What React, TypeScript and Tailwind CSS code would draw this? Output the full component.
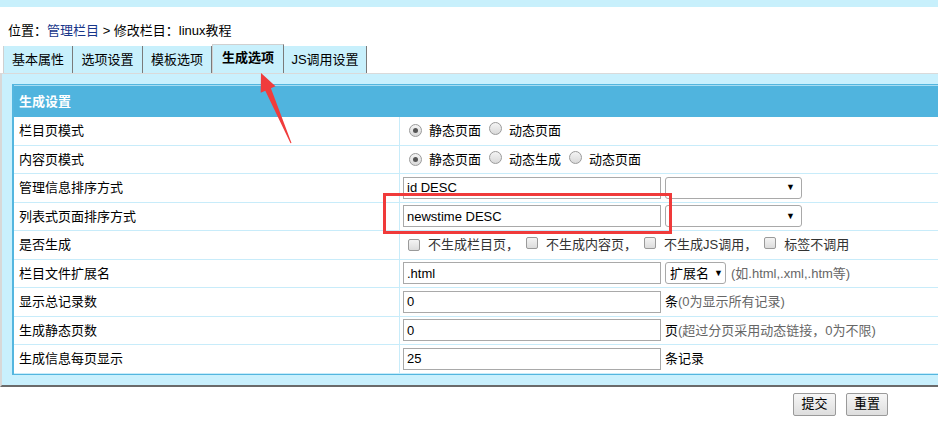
import React from 'react';

const Radio = ({ checked }: { checked?: boolean }) => (
  <span className="inline-flex h-[13px] w-[13px] shrink-0 items-center justify-center rounded-full border border-[#9a9a9a] bg-gradient-to-b from-[#f4f4f4] to-[#d9d9d9]">
    {checked && <span className="h-[5px] w-[5px] rounded-full bg-[#555]" />}
  </span>
);

const Check = () => (
  <span className="inline-block h-[12px] w-[12px] shrink-0 rounded-[2px] border border-[#9a9a9a] bg-gradient-to-b from-[#f4f4f4] to-[#dcdcdc]" />
);

const TextBox = ({ value }: { value: string }) => (
  <div className="flex h-[22px] w-[258px] shrink-0 items-center border border-[#a9a9a9] bg-white pl-[3px] text-black">
    {value}
  </div>
);

const SelectBox = ({ label, width }: { label?: string; width: string }) => (
  <div className={`ml-[4px] flex h-[22px] ${width} shrink-0 items-center justify-between rounded-[3px] border border-[#a9a9a9] bg-white pl-[4px] pr-[6px] text-black`}>
    <span>{label}</span>
    <span className="text-[9px] leading-none">▼</span>
  </div>
);

const Row = ({ label, children }: { label: string; children: React.ReactNode }) => (
  <div className="flex h-[28.5px] border-b border-[#c8ecfa] bg-white">
    <div className="flex w-[386px] shrink-0 items-center border-r border-[#c8ecfa] pl-[5px] text-black">{label}</div>
    <div className="flex items-center">{children}</div>
  </div>
);

const tabs = ['基本属性', '选项设置', '模板选项', '生成选项', 'JS调用设置'];
const tabWidths = ['w-[70px]', 'w-[70px]', 'w-[69px]', 'w-[72px]', 'w-[83px]'];

export default function App() {
  return (
    <div className="relative h-[448px] w-[938px] overflow-hidden bg-white font-['Liberation_Sans','Noto_Sans_CJK_SC',sans-serif] text-[13px]">
      <div className="h-[7px] bg-[#c8f0fc]" />

      <div className="h-[37px] pl-[8px] pt-[16px] leading-[16px] text-black">
        位置：<span className="text-[#17368a]">管理栏目</span> &gt; 修改栏目：linux教程
      </div>

      <div className="flex h-[29px] items-end pl-[3px]">
        {tabs.map((t, i) => (
          <div
            key={t}
            className={`flex ${tabWidths[i]} items-center justify-center border-r border-[#7a7a7a] bg-[#c8f0fc] text-black ${
              i === 3
                ? 'h-[29px] border-l border-t border-l-[#d0d0d0] border-t-[#d0d0d0] pb-[2px] font-bold'
                : i === 0
                ? 'h-[27px] border-l border-l-[#d0d0d0]'
                : 'h-[27px]'
            }`}
          >
            {t}
          </div>
        ))}
      </div>

      <div className="border-b-2 border-l-2 border-t border-b-[#6b6b6b] border-l-[#d8d8d8] border-t-[#dadada] bg-[#c9f0fd] pb-[10px] pl-[10px] pt-[10px]">
        <div className="border-b border-l-2 border-t border-[#54b6df]">
          <div className="flex h-[32px] items-center border-t border-[#a6dcf2] bg-[#50b4de] pl-[5px] font-bold text-white">
            生成设置
          </div>

          <Row label="栏目页模式">
            <div className="flex items-center pl-[9px]">
              <Radio checked />
              <span className="ml-[7px]">静态页面</span>
              <span className="ml-[8px]"><Radio /></span>
              <span className="ml-[7px]">动态页面</span>
            </div>
          </Row>

          <Row label="内容页模式">
            <div className="flex items-center pl-[9px]">
              <Radio checked />
              <span className="ml-[7px]">静态页面</span>
              <span className="ml-[8px]"><Radio /></span>
              <span className="ml-[7px]">动态生成</span>
              <span className="ml-[8px]"><Radio /></span>
              <span className="ml-[7px]">动态页面</span>
            </div>
          </Row>

          <Row label="管理信息排序方式">
            <div className="flex items-center pl-[3px]">
              <TextBox value="id DESC" />
              <SelectBox width="w-[137px]" />
            </div>
          </Row>

          <Row label="列表式页面排序方式">
            <div className="flex items-center pl-[3px]">
              <TextBox value="newstime DESC" />
              <SelectBox width="w-[137px]" />
            </div>
          </Row>

          <Row label="是否生成">
            <div className="flex items-center pl-[8px] text-[#333]">
              <Check />
              <span className="ml-[8px]">不生成栏目页，</span>
              <span className="ml-[7px]"><Check /></span>
              <span className="ml-[8px]">不生成内容页，</span>
              <span className="ml-[7px]"><Check /></span>
              <span className="ml-[8px]">不生成JS调用，</span>
              <span className="ml-[7px]"><Check /></span>
              <span className="ml-[8px]">标签不调用</span>
            </div>
          </Row>

          <Row label="栏目文件扩展名">
            <div className="flex items-center pl-[3px]">
              <TextBox value=".html" />
              <div className="ml-[4px] flex h-[22px] w-[61px] shrink-0 items-center gap-[5px] rounded-[3px] border border-[#a9a9a9] bg-white pl-[4px] text-black">
                <span>扩展名</span>
                <span className="text-[9px] leading-none">▼</span>
              </div>
              <span className="ml-[5px] text-[#666]">(如.html,.xml,.htm等)</span>
            </div>
          </Row>

          <Row label="显示总记录数">
            <div className="flex items-center pl-[3px]">
              <TextBox value="0" />
              <span className="ml-[4px] text-black">条</span>
              <span className="text-[#666]">(0为显示所有记录)</span>
            </div>
          </Row>

          <Row label="生成静态页数">
            <div className="flex items-center pl-[3px]">
              <TextBox value="0" />
              <span className="ml-[4px] text-black">页</span>
              <span className="text-[#666]">(超过分页采用动态链接，0为不限)</span>
            </div>
          </Row>

          <Row label="生成信息每页显示">
            <div className="flex items-center pl-[3px]">
              <TextBox value="25" />
              <span className="ml-[4px] text-black">条记录</span>
            </div>
          </Row>
        </div>
      </div>

      <div className="flex justify-end gap-[10px] pr-[50px] pt-[6px]">
        <button className="h-[23px] w-[43px] rounded-[2px] border border-[#9a9a9a] bg-gradient-to-b from-[#f6f6f6] to-[#dedede] text-black">
          提交
        </button>
        <button className="h-[23px] w-[42px] rounded-[2px] border border-[#9a9a9a] bg-gradient-to-b from-[#f6f6f6] to-[#dedede] text-black">
          重置
        </button>
      </div>

      {/* red highlight box */}
      <div className="absolute left-[383px] top-[193px] h-[41px] w-[289px] border-[3px] border-[#f03a3a]" />

      {/* red arrow */}
      <svg className="absolute left-[250px] top-[68px]" width="50" height="80" viewBox="0 0 50 80">
        <polygon
          points="11,5 25.5,18.3 20.9,20.3 41.5,75 40.5,75.2 15.3,22.7 10.7,24.7"
          fill="#f03c3c"
        />
      </svg>
    </div>
  );
}
